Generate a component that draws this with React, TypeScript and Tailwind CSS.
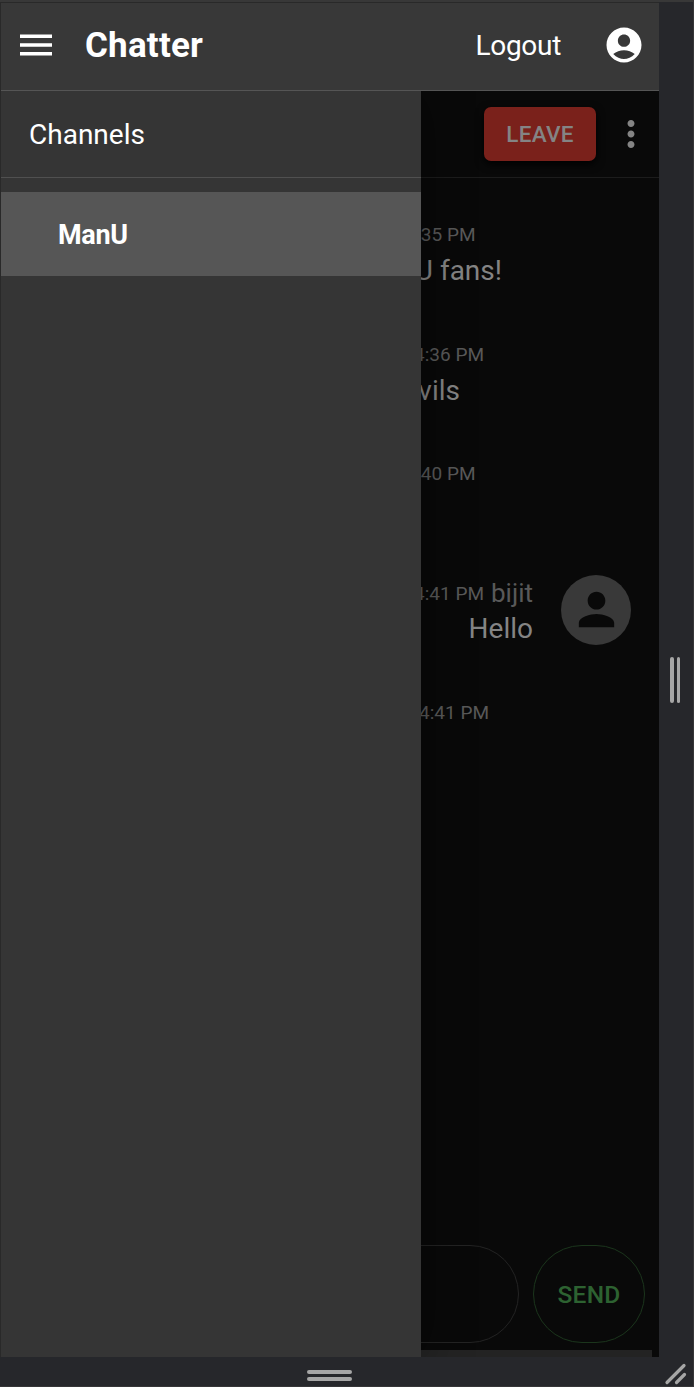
import React from 'react';

type IconProps = { className?: string };

const MenuIcon = ({ className }: IconProps) => (
  <svg viewBox="0 0 42 42" className={className} fill="currentColor">
    <path d="M5 31.5h32V28H5v3.500zm0-8.750h32v-3.500H5v3.500zm0-12.250V14h32v-3.500H5z" />
  </svg>
);

const AccountIcon = ({ className }: IconProps) => (
  <svg viewBox="0 0 24 24" className={className} fill="currentColor">
    <path d="M12 2C6.48 2 2 6.48 2 12s4.48 10 10 10 10-4.48 10-10S17.52 2 12 2zm0 4c1.93 0 3.500 1.57 3.500 3.500S13.930 13 12 13s-3.500-1.570-3.500-3.500S10.070 6 12 6zm0 14c-2.030 0-4.430-.820-6.140-2.880C7.550 15.800 9.680 15 12 15s4.450.800 6.140 2.120C16.430 19.180 14.030 20 12 20z" />
  </svg>
);

const MoreIcon = ({ className }: IconProps) => (
  <svg viewBox="0 0 24 24" className={className} fill="currentColor">
    <path d="M12 8c1.1 0 2-.9 2-2s-.9-2-2-2-2 .9-2 2 .9 2 2 2zm0 2c-1.1 0-2 .9-2 2s.9 2 2 2 2-.9 2-2-.9-2-2-2zm0 6c-1.1 0-2 .9-2 2s.9 2 2 2 2-.9 2-2-.9-2-2-2z" />
  </svg>
);

const PersonIcon = ({ className }: IconProps) => (
  <svg viewBox="0 0 24 24" className={className} fill="currentColor">
    <path d="M12 12c2.21 0 4-1.79 4-4s-1.79-4-4-4-4 1.79-4 4 1.79 4 4 4zm0 2c-2.67 0-8 1.34-8 4v2h16v-2c0-2.66-5.33-4-8-4z" />
  </svg>
);

const Header = () => (
  <header className="flex h-[88px] shrink-0 items-center border-b border-[#555555] bg-[#383838] pr-[14px] pb-[4px] pl-[14px] text-white">
    <MenuIcon className="size-[42px]" />
    <h1 className="ml-[28px] pt-[3px] text-[35px] leading-[42px] font-bold tracking-[0.2px]">Chatter</h1>
    <span className="mr-[42px] ml-auto pt-[2px] text-[28px] leading-[42px] tracking-[-0.3px]">Logout</span>
    <AccountIcon className="size-[42px]" />
  </header>
);

const Time = ({ children }: { children: string }) => (
  <span className="text-[19px] leading-[35px] text-[#595959]">{children}</span>
);

const Message = ({ time, text, timeEnd, textEnd }: { time: string; text?: string; timeEnd: string; textEnd?: string }) => (
  <div className="flex h-[119.5px] flex-col items-start whitespace-nowrap">
    <div className={`text-right ${timeEnd}`}><Time>{time}</Time></div>
    {text && <div className={`pt-px text-right text-[28px] leading-[36px] text-[#848484] ${textEnd}`}>{text}</div>}
  </div>
);

const Channel = () => (
  <main className="flex min-h-0 flex-1 flex-col bg-[#090909]">
    <div className="flex h-[87px] shrink-0 items-center border-b border-[#1c1c1c] pr-[7px]">
      <button className="ml-auto h-[54px] w-[112px] rounded-[7px] bg-[#7a211b] pt-[2px] text-[22.5px] font-medium tracking-[0.3px] text-[#848484] shadow-[0_3px_9px_#000000]">LEAVE</button>
      <MoreIcon className="ml-[14px] size-[42px] text-[#848484]" />
    </div>
    <section className="flex-1 pt-[39px]">
      <Message time="4:35 PM" timeEnd="w-[474.5px]" text="ManU fans!" textEnd="w-[501px]" />
      <Message time="4:36 PM" timeEnd="w-[483px]" text="Devils" textEnd="w-[459px]" />
      <Message time="4:40 PM" timeEnd="w-[474.5px]" />
      <div className="flex h-[119.5px] items-start justify-end pr-[28px] whitespace-nowrap">
        <div className="mr-[28px] text-right">
          <div className="flex h-[35px] items-start justify-end gap-[7px]">
            <Time>4:41 PM</Time>
            <span className="text-[26px] leading-[35px] text-[#595959]">bijit</span>
          </div>
          <div className="text-[28px] leading-[36px] text-[#848484]">Hello</div>
        </div>
        <div className="-mt-px flex size-[70px] items-center justify-center rounded-full bg-[#393939]">
          <PersonIcon className="size-[53px] text-[#090909]" />
        </div>
      </div>
      <Message time="4:41 PM" timeEnd="w-[488px]" />
    </section>
    <div className="flex h-[105px] shrink-0 items-start gap-[14px] pr-[14px]">
      <div className="h-[98px] flex-1 rounded-[49px] border border-[#232323]" />
      <button className="h-[98px] w-[112px] rounded-[49px] border border-[#1b351c] pt-[2px] text-[24.5px] font-medium tracking-[0.2px] text-[#2d6231]">SEND</button>
    </div>
    <div className="mr-[7px] h-[7px] shrink-0 bg-[#232323]" />
  </main>
);

const Drawer = () => (
  <aside className="absolute top-0 bottom-0 left-0 w-[420px] bg-[#353535] text-white shadow-[0_0_48px_#00000066]">
    <div className="flex h-[87px] items-center border-b border-[#505050] pt-[2px] pl-[28px] text-[28px]">Channels</div>
    <div className="mt-[14px] flex h-[84px] items-center bg-[#565656] pt-[2px] pl-[57px] text-[27px] font-bold tracking-[-0.3px]">ManU</div>
  </aside>
);

export default function App() {
  return (
    <div className="flex h-[1387px] w-[694px] flex-col overflow-hidden border-r border-b border-[#363638] bg-[#26272b] font-['Roboto','Liberation_Sans',sans-serif]">
      <div className="h-[2px] shrink-0 bg-[#383838]" />
      <div className="flex h-[1355px] shrink-0">
        <div className="flex w-[659px] flex-col overflow-hidden border-t border-l border-[#292929]">
          <Header />
          <div className="relative flex min-h-0 flex-1 flex-col overflow-hidden">
            <Channel />
            <Drawer />
          </div>
        </div>
        <div className="flex flex-1 items-center gap-[3px] pl-[11px]">
          <i className="h-[46px] w-[3.5px] rounded-full bg-[#a6a6a6]" />
          <i className="h-[46px] w-[3.5px] rounded-full bg-[#a6a6a6]" />
        </div>
      </div>
      <div className="flex flex-1 items-center">
        <div className="flex w-[659px] flex-col items-center gap-[3px] pt-[7px]">
          <i className="h-[4px] w-[45px] rounded-full bg-[#a6a6a6]" />
          <i className="h-[4px] w-[45px] rounded-full bg-[#a6a6a6]" />
        </div>
        <svg width="34" height="30" viewBox="0 0 34 30" stroke="#a6a6a6" strokeWidth="3.2" strokeLinecap="round">
          <path d="M8 25.500L25 8.500M17.500 25.500L25.500 17.500" />
        </svg>
      </div>
    </div>
  );
}
